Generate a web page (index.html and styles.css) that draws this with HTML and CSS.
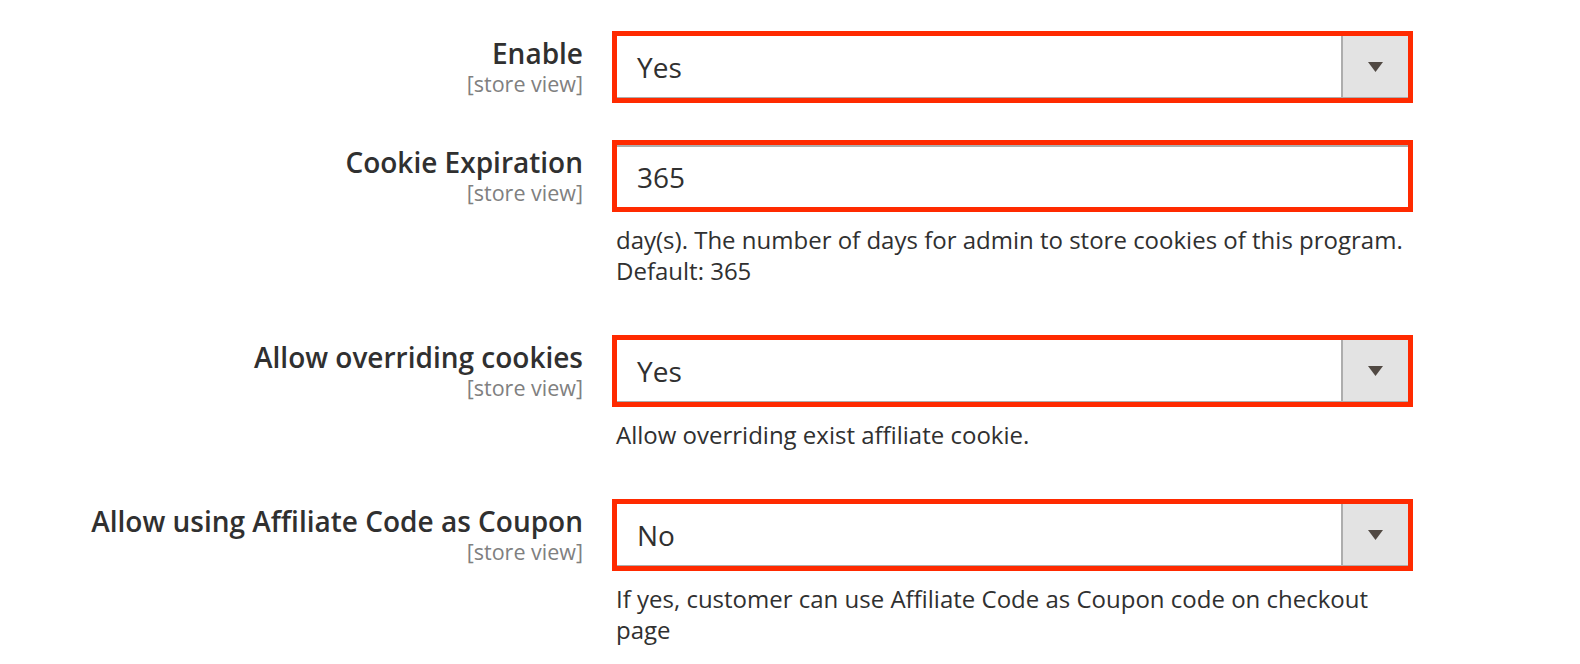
FILE: index.html
```html
<!DOCTYPE html>
<html lang="en">
<head>
<meta charset="utf-8">
<title>Affiliate settings</title>
<link rel="stylesheet" href="styles.css">
</head>
<body>
<div class="form">
  <div class="row">
    <div class="label"><span class="title">Enable</span><span class="scope">[store view]</span></div>
    <div class="control">
      <div class="frame">
        <div class="select"><span class="value">Yes</span><span class="btn"><svg width="15" height="10" viewBox="0 0 15 10"><path d="M0 0H15L7.5 10Z" fill="#514943"/></svg></span></div>
      </div>
    </div>
  </div>
  <div class="row">
    <div class="label"><span class="title">Cookie Expiration</span><span class="scope">[store view]</span></div>
    <div class="control">
      <div class="frame">
        <div class="input"><span class="value">365</span></div>
      </div>
      <div class="note">day(s). The number of days for admin to store cookies of this program. Default: 365</div>
    </div>
  </div>
  <div class="row">
    <div class="label"><span class="title">Allow overriding cookies</span><span class="scope">[store view]</span></div>
    <div class="control">
      <div class="frame">
        <div class="select"><span class="value">Yes</span><span class="btn"><svg width="15" height="10" viewBox="0 0 15 10"><path d="M0 0H15L7.5 10Z" fill="#514943"/></svg></span></div>
      </div>
      <div class="note">Allow overriding exist affiliate cookie.</div>
    </div>
  </div>
  <div class="row">
    <div class="label"><span class="title">Allow using Affiliate Code as Coupon</span><span class="scope">[store view]</span></div>
    <div class="control">
      <div class="frame">
        <div class="select"><span class="value">No</span><span class="btn"><svg width="15" height="10" viewBox="0 0 15 10"><path d="M0 0H15L7.5 10Z" fill="#514943"/></svg></span></div>
      </div>
      <div class="note">If yes, customer can use Affiliate Code as Coupon code on checkout page</div>
    </div>
  </div>
</div>
</body>
</html>
```

FILE: styles.css
```css
html, body {
  margin: 0;
  padding: 0;
  background: #ffffff;
}
body {
  font-family: "Open Sans", "Liberation Sans", sans-serif;
  color: #303030;
}
.form {
  padding-top: 31px;
  display: flex;
  flex-direction: column;
  gap: 37px;
}
.row {
  display: grid;
  grid-template-columns: 583px 801px;
  column-gap: 29px;
}
.label {
  display: flex;
  flex-direction: column;
  align-items: flex-end;
  text-align: right;
  padding-top: 5px;
}
.title {
  font-size: 28px;
  font-weight: 600;
  line-height: 34px;
  color: #303030;
}
.scope {
  font-size: 21.5px;
  line-height: 27px;
  color: #808080;
}
.frame {
  border: 5px solid #ff2a00;
  height: 62px;
  box-sizing: content-box;
}
.select, .input {
  height: 100%;
  box-sizing: border-box;
  display: flex;
  align-items: center;
  background: #fff;
}
.select {
  border-bottom: 1px solid #adadad;
}
.input {
  border-top: 2px solid #adadad;
}
.value {
  flex: 1;
  padding-left: 20px;
  font-size: 28px;
  color: #303030;
}
.btn {
  align-self: stretch;
  width: 65px;
  border-left: 2px solid #adadad;
  background: #e3e3e3;
  display: flex;
  align-items: center;
  justify-content: center;
}
.btn svg {
  display: block;
}
.note {
  margin-top: 12px;
  padding-bottom: 12px;
  padding-left: 4px;
  font-size: 24px;
  line-height: 31px;
  color: #303030;
}
```
